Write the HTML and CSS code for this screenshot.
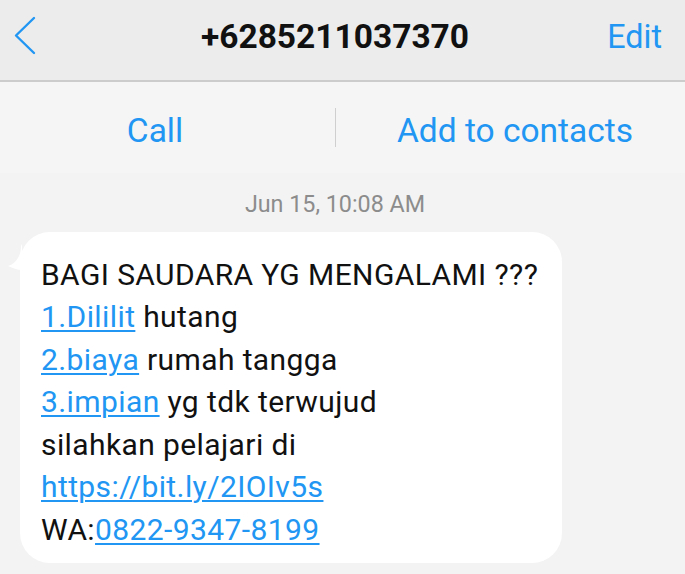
FILE: index.html
```html
<!DOCTYPE html>
<html>
<head>
<meta charset="utf-8">
<link rel="stylesheet" href="styles.css">
</head>
<body>
<div class="screen">
  <header class="topbar">
    <div class="tb-left">
      <svg class="back" width="24" height="40" viewBox="0 0 24 40"><path d="M21 2 L3 19.5 L21 37" fill="none" stroke="#2196f3" stroke-width="2.4" stroke-linecap="round" stroke-linejoin="round"/></svg>
    </div>
    <div class="title">+6285211037370</div>
    <div class="tb-right"><span class="edit">Edit</span></div>
  </header>
  <nav class="actions">
    <div class="act act-call">Call</div>
    <div class="sep"></div>
    <div class="act act-add">Add to contacts</div>
  </nav>
  <main class="thread">
    <div class="date">Jun 15, 10:08 AM</div>
    <div class="bubble">
      <svg class="tail" width="15" height="28" viewBox="0 0 15 28"><path d="M15 0 L14 2 C14 13 8 20 1 22 C6 24 10 26 15 26 Z" fill="#ffffff"/></svg>
      <div class="line">BAGI SAUDARA YG MENGALAMI ???</div>
      <div class="line"><a>1.Dililit</a> hutang</div>
      <div class="line"><a>2.biaya</a> rumah tangga</div>
      <div class="line"><a>3.impian</a> yg tdk terwujud</div>
      <div class="line">silahkan pelajari di</div>
      <div class="line"><a>https://bit.ly/2IOIv5s</a></div>
      <div class="line">WA:<a>0822-9347-8199</a></div>
    </div>
  </main>
</div>
</body>
</html>
```

FILE: styles.css
```css
html, body {
  margin: 0;
  padding: 0;
}
body {
  background: #f3f3f3;
  font-family: Roboto, "Noto Sans", sans-serif;
  width: 685px;
  height: 574px;
  overflow: hidden;
}
.screen {
  display: flex;
  flex-direction: column;
}
.topbar {
  height: 80px;
  background: #ececec;
  border-bottom: 2px solid #cccccc;
  display: grid;
  grid-template-columns: 1fr auto 1fr;
  align-items: start;
  padding-right: 15px;
}
.tb-left {
  padding-top: 16px;
  padding-left: 13px;
}
.back {
  display: block;
}
.title {
  padding-top: 17px;
  font-weight: 700;
  font-size: 33.5px;
  line-height: 40px;
  color: #111;
}
.tb-right {
  display: flex;
  justify-content: flex-end;
  padding-top: 17px;
  padding-right: 8px;
}
.edit {
  font-size: 32.3px;
  line-height: 40px;
  color: #2196f3;
}
.actions {
  height: 91px;
  background: #f5f5f5;
  display: flex;
  align-items: flex-start;
}
.act {
  font-size: 33.5px;
  line-height: 40px;
  color: #2196f3;
  padding-top: 28.5px;
  text-align: center;
  box-sizing: border-box;
}
.act-call {
  width: 335px;
  padding-right: 25px;
}
.sep {
  width: 1px;
  height: 39px;
  background: #cfcfcf;
  margin-top: 26px;
}
.act-add {
  flex: 1;
  padding-left: 9px;
}
.thread {
  display: flex;
  flex-direction: column;
  align-items: flex-start;
  padding-right: 15px;
}
.date {
  align-self: center;
  font-size: 23.3px;
  color: #8c8c8c;
  margin-top: 18px;
  height: 26px;
  line-height: 26px;
}
.bubble {
  margin-top: 15px;
  margin-left: 20px;
  width: 542px;
  box-sizing: border-box;
  background: #ffffff;
  border-radius: 30px;
  padding: 21.5px 10px 12px 21px;
  position: relative;
  font-size: 30px;
  letter-spacing: 0.4px;
  color: #111;
}
.tail {
  position: absolute;
  left: -13px;
  top: 12px;
}
.line {
  height: 42.5px;
  line-height: 42.5px;
  white-space: nowrap;
}
.bubble a {
  color: #2196f3;
  text-decoration: underline;
  text-underline-offset: 3px;
  text-decoration-thickness: 1.5px;
}
```
